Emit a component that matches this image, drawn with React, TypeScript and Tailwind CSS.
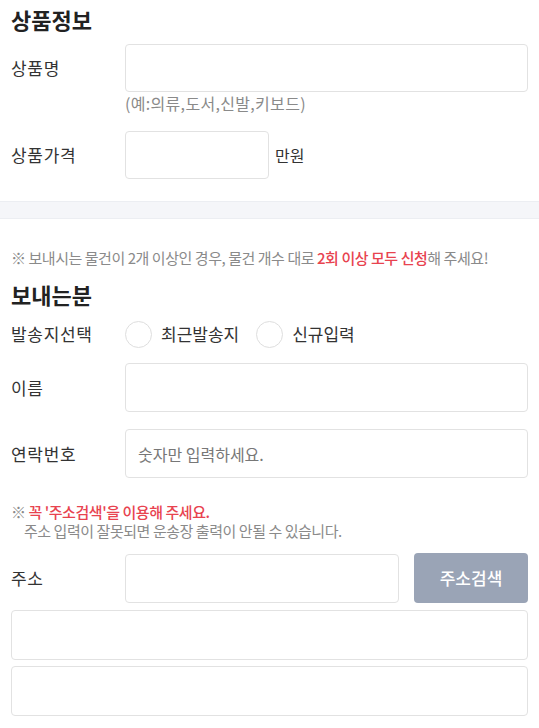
import React from "react";

const font = { fontFamily: '"Noto Sans CJK KR", "Noto Sans", sans-serif' };

function Input({ className = "", placeholder }: { className?: string; placeholder?: string }) {
  return (
    <div
      className={`border-[1.5px] border-[#e2e2e2] rounded-[4px] bg-white flex items-center px-[12px] text-[16px] text-[#777] ${className}`}
    >
      {placeholder}
    </div>
  );
}

function Label({ children }: { children: React.ReactNode }) {
  return <div className="w-[114px] text-[17px] tracking-[0.04em] text-[#333]">{children}</div>;
}

function Radio({ label }: { label: string }) {
  return (
    <div className="flex items-center">
      <div className="w-[27px] h-[27px] rounded-full border-[1.5px] border-[#dedede] bg-white" />
      <span className="ml-[9px] text-[17px] text-[#333]">{label}</span>
    </div>
  );
}

export default function App() {
  return (
    <div className="w-[539px] h-[728px] bg-white overflow-hidden" style={font}>
      <div className="px-[11px] pt-[4px]">
        <h2 className="text-[22px] leading-[30px] font-bold text-[#222]">상품정보</h2>
        <div className="mt-[10px] flex items-center">
          <Label>상품명</Label>
          <Input className="flex-1 h-[48px]" />
        </div>
        <div className="ml-[114px] mt-[1px] text-[16px] leading-[20px] tracking-[0.02em] text-[#8a8a8a]">
          (예:의류,도서,신발,키보드)
        </div>
        <div className="mt-[18px] flex items-center">
          <Label>상품가격</Label>
          <Input className="w-[144px] h-[48px]" />
          <span className="ml-[6px] text-[16px] text-[#333]">만원</span>
        </div>
      </div>
      <div className="mt-[22px] h-[18px] bg-[#f5f6f9] border-y border-[#eceef2]" />
      <div className="px-[11px]">
        <p className="mt-[29px] text-[15px] leading-[20px] tracking-[-0.03em] text-[#8a8a8a] whitespace-nowrap">
          ※ 보내시는 물건이 2개 이상인 경우, 물건 개수 대로{" "}
          <span className="text-[#e8434f] font-medium">2회 이상 모두 신청</span>해 주세요!
        </p>
        <h2 className="mt-[11px] text-[22px] leading-[30px] font-bold text-[#222]">보내는분</h2>
        <div className="mt-[11px] flex items-center h-[28px]">
          <Label>발송지선택</Label>
          <Radio label="최근발송지" />
          <div className="ml-[17px]">
            <Radio label="신규입력" />
          </div>
        </div>
        <div className="mt-[15px] flex items-center">
          <Label>이름</Label>
          <Input className="flex-1 h-[49px]" />
        </div>
        <div className="mt-[17px] flex items-center">
          <Label>연락번호</Label>
          <Input className="flex-1 h-[49px]" placeholder="숫자만 입력하세요." />
        </div>
        <div className="mt-[24px] text-[15px] leading-[19px] tracking-[-0.03em]">
          <p className="text-[#8a8a8a]">
            ※ <span className="text-[#e8434f] font-medium">꼭 '주소검색'을 이용해 주세요.</span>
          </p>
          <p className="pl-[13px] text-[#8a8a8a]">주소 입력이 잘못되면 운송장 출력이 안될 수 있습니다.</p>
        </div>
        <div className="mt-[13px] flex items-center">
          <Label>주소</Label>
          <Input className="w-[274px] h-[49px]" />
          <button className="ml-[15px] flex-1 h-[50px] rounded-[4px] bg-[#9aa4b6] text-white text-[17px] font-medium">
            주소검색
          </button>
        </div>
        <Input className="mt-[7px] h-[50px]" />
        <Input className="mt-[6px] h-[50px]" />
      </div>
    </div>
  );
}
